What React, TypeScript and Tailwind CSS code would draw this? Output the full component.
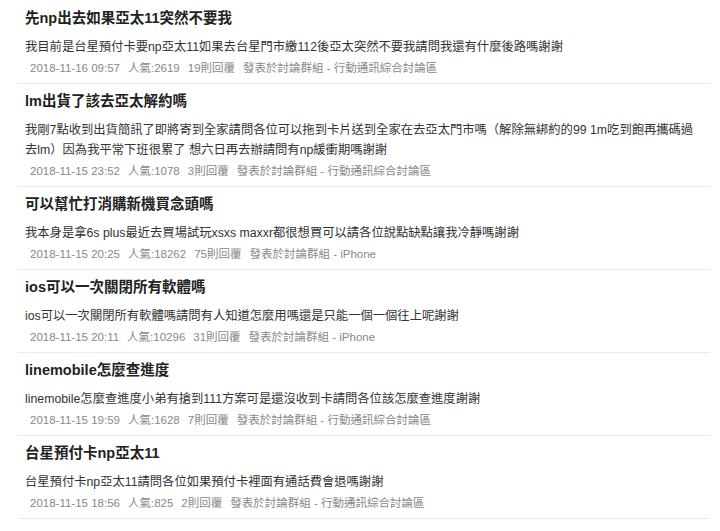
const posts = [
  {
    title: "先np出去如果亞太11突然不要我",
    body: "我目前是台星預付卡要np亞太11如果去台星門市繳112後亞太突然不要我請問我還有什麼後路嗎謝謝",
    time: "2018-11-16 09:57",
    views: "2619",
    replies: "19",
    board: "行動通訊綜合討論區",
  },
  {
    title: "lm出貨了該去亞太解約嗎",
    body: "我剛7點收到出貨簡訊了即將寄到全家請問各位可以拖到卡片送到全家在去亞太門市嗎（解除無綁約的99 1m吃到飽再攜碼過去lm）因為我平常下班很累了 想六日再去辦請問有np緩衝期嗎謝謝",
    time: "2018-11-15 23:52",
    views: "1078",
    replies: "3",
    board: "行動通訊綜合討論區",
  },
  {
    title: "可以幫忙打消購新機買念頭嗎",
    body: "我本身是拿6s plus最近去買場試玩xsxs maxxr都很想買可以請各位說點缺點讓我冷靜嗎謝謝",
    time: "2018-11-15 20:25",
    views: "18262",
    replies: "75",
    board: "iPhone",
  },
  {
    title: "ios可以一次關閉所有軟體嗎",
    body: "ios可以一次關閉所有軟體嗎請問有人知道怎麼用嗎還是只能一個一個往上呢謝謝",
    time: "2018-11-15 20:11",
    views: "10296",
    replies: "31",
    board: "iPhone",
  },
  {
    title: "linemobile怎麼查進度",
    body: "linemobile怎麼查進度小弟有搶到111方案可是還沒收到卡請問各位該怎麼查進度謝謝",
    time: "2018-11-15 19:59",
    views: "1628",
    replies: "7",
    board: "行動通訊綜合討論區",
  },
  {
    title: "台星預付卡np亞太11",
    body: "台星預付卡np亞太11請問各位如果預付卡裡面有通話費會退嗎謝謝",
    time: "2018-11-15 18:56",
    views: "825",
    replies: "2",
    board: "行動通訊綜合討論區",
  },
];

export default function App() {
  return (
    <div
      className="min-h-screen bg-white px-[18px]"
      style={{ fontFamily: '"Liberation Sans", Arial, "Noto Sans CJK TC", sans-serif' }}
    >
      <ul className="w-[692px] pt-[1px]">
        {posts.map((post) => (
          <li key={post.time} className="border-b border-[#ebebeb] px-[7px] pb-[5px] pt-[7px]">
            <h2 className="text-[14.5px] font-bold leading-[20px] text-[#222]">{post.title}</h2>
            <p className="mt-[9px] pr-[4px] text-[12.3px] leading-[20px] text-[#333]">{post.body}</p>
            <div className="mt-[1px] flex gap-[8px] pl-[5px] text-[11.5px] leading-[20px] text-[#888]">
              <span>{post.time}</span>
              <span>人氣:{post.views}</span>
              <span>{post.replies}則回覆</span>
              <span>發表於討論群組 - {post.board}</span>
            </div>
          </li>
        ))}
      </ul>
    </div>
  );
}
